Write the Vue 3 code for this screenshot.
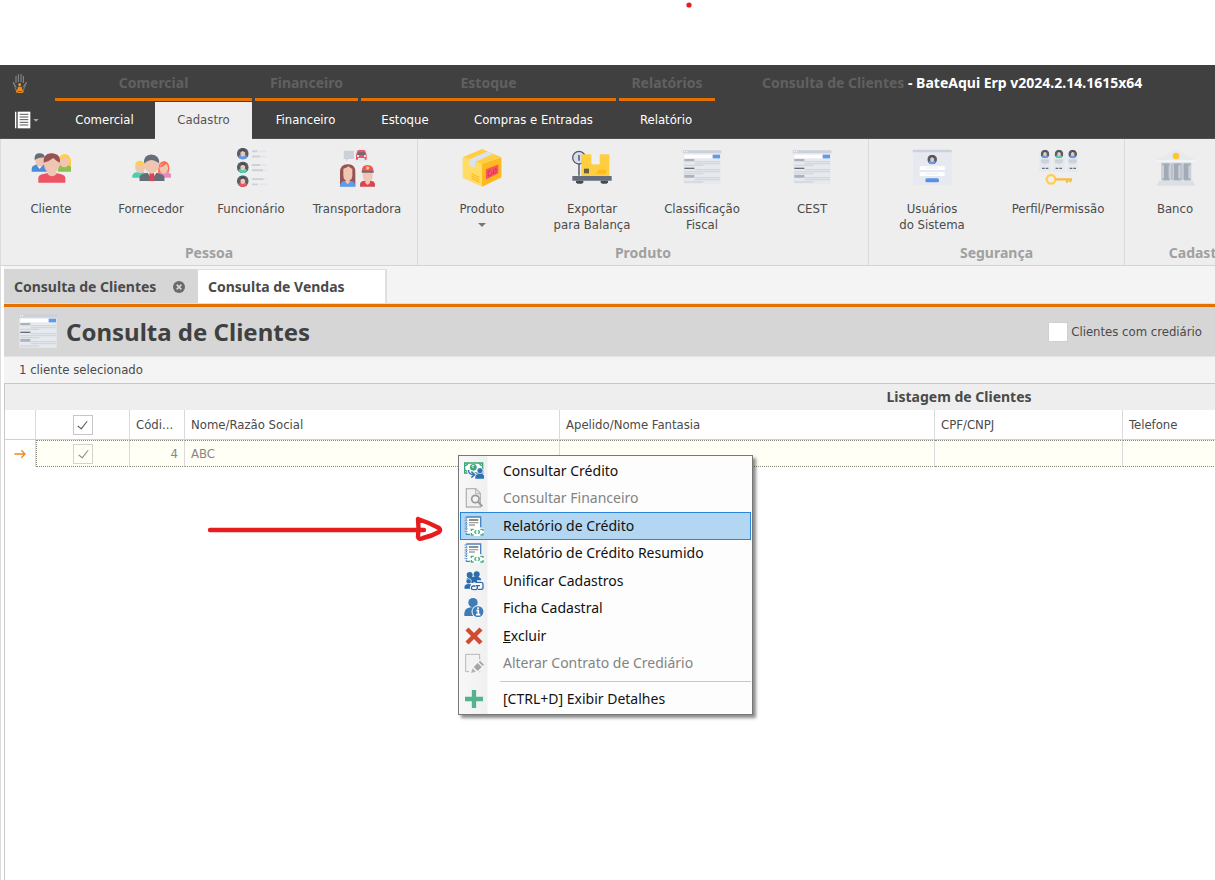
<script setup>
import { ref } from 'vue'

const contexts = [
  { label: 'Comercial', size: 'w197' },
  { label: 'Financeiro', size: 'w103' },
  { label: 'Estoque', size: 'w255' },
  { label: 'Relatórios', size: 'w96' },
]
const ribbonTabs = [
  { label: 'Comercial', size: 't101' },
  { label: 'Cadastro', size: 't97', active: true },
  { label: 'Financeiro', size: 't107' },
  { label: 'Estoque', size: 't92' },
  { label: 'Compras e Entradas', size: 't165' },
  { label: 'Relatório', size: 't100' },
]
const groups = [
  {
    label: 'Pessoa', kind: 'pessoa',
    items: [
      { icon: 'cliente', lines: ['Cliente'] },
      { icon: 'fornecedor', lines: ['Fornecedor'] },
      { icon: 'funcionario', lines: ['Funcionário'] },
      { icon: 'transportadora', lines: ['Transportadora'], wide: true },
    ],
  },
  {
    label: 'Produto', kind: 'produto',
    items: [
      { icon: 'caixa', lines: ['Produto'], drop: true },
      { icon: 'balanca', lines: ['Exportar', 'para Balança'] },
      { icon: 'lista', lines: ['Classificação', 'Fiscal'] },
      { icon: 'lista', lines: ['CEST'] },
    ],
  },
  {
    label: 'Segurança', kind: 'seguranca',
    items: [
      { icon: 'usuarios', lines: ['Usuários', 'do Sistema'] },
      { icon: 'perfil', lines: ['Perfil/Permissão'] },
    ],
  },
  { label: 'Cadastros', kind: 'cadastros', items: [{ icon: 'banco', lines: ['Banco'] }] },
]
const menu = [
  { icon: 'credito', label: 'Consultar Crédito' },
  { icon: 'financeiro', label: 'Consultar Financeiro', disabled: true },
  { icon: 'relatorio', label: 'Relatório de Crédito', hot: true },
  { icon: 'relatorio', label: 'Relatório de Crédito Resumido' },
  { icon: 'unificar', label: 'Unificar Cadastros' },
  { icon: 'ficha', label: 'Ficha Cadastral' },
  { icon: 'excluir', label: 'xcluir', key: 'E' },
  { icon: 'alterar', label: 'Alterar Contrato de Crediário', disabled: true },
]
const allChecked = ref(true)
const rowChecked = ref(true)
const withCredit = ref(false)
</script>

<template>
  <div class="app">
    <svg class="defs" aria-hidden="true">
      <symbol id="i-cliente" viewBox="-3 -4 120 120">
        <path d="M-1 70v-8q0-9 10-12l10-3h12l10 3q6 2 6 10v10z" fill="#4a8ddb" />
        <path d="M17 44h12v10l-6 8-6-8z" fill="#fff" /><ellipse cx="24" cy="38" rx="14" ry="17" fill="#f0c5b2" />
        <path d="M8 36q-3-20 13-21 16-1 18 13-12-2-18 1-10 2-13 7z" fill="#656d78" />
        <path d="M80 60q-6-40 18-42 22 0 20 40l-8 4H84z" fill="#ffc83f" />
        <path d="M78 70v-8q2-10 12-12h14q15 3 16 12v8z" fill="#8cc152" /><ellipse cx="97" cy="40" rx="14" ry="17" fill="#f0c5b2" /><path d="M82 32q18 0 24-12l8 34q4-36-16-36-14 0-16 14z" fill="#ffce54" />
        <path d="M19 103V90q0-9 11-12l17-4h24l17 4q12 3 12 12v13z" fill="#ed5564" />
        <path d="M47 66h26v12q-13 12-26 0z" fill="#f0c5b2" /><ellipse cx="59" cy="48" rx="23" ry="27" fill="#f0c5b2" />
        <path d="M35 43q-2-26 21-28 8-1 12 1 18 3 16 27-12-5-20-14-12 10-29 14z" fill="#965353" />
      </symbol>
      <symbol id="i-fornecedor" viewBox="-3 -4 122 122">
        <path d="M1 90v-6q1-8 12-11h22l10 5v12z" fill="#48cfad" /><ellipse cx="25" cy="58" rx="15" ry="18" fill="#f0c5b2" /><path d="M10 54q-1-15 14-16 15 0 16 14-15-5-30 2z" fill="#ffce54" />
        <path d="M80 76q-3-36 18-37 20 2 15 34z" fill="#fc6e51" /><path d="M76 90V78l12-5h20q12 3 13 11v6z" fill="#ec87c0" /><ellipse cx="97" cy="61" rx="13" ry="16" fill="#f0c5b2" /><path d="M84 58q15-2 20-12l8 8-14-14z" fill="#fc6e51" />
        <path d="M23 100V89q0-8 11-11l16-5h22l15 5q12 3 12 11v11z" fill="#656d78" />
        <path d="M46 72h30l-15 22z" fill="#fff" /><path d="M53 76h15v24H53z" fill="#da4453" /><ellipse cx="60" cy="51" rx="22" ry="26" fill="#f0c5b2" />
        <path d="M37 46q-3-25 22-27 25 1 24 27-16-10-23-10-8 0-23 10z" fill="#656d78" />
      </symbol>
      <symbol id="i-avatar" viewBox="0 0 36 36">
        <circle cx="18" cy="18" r="18" fill="#555e69" /><path d="M5 29q1-8 13-8t13 8q-5 7-13 7T5 29z" fill="currentColor" /><rect x="11" y="7" width="14" height="20" rx="7" fill="#f0c5b2" /><path d="M10 15q0-10 8-11 9 1 8 11-5-5-8-5t-8 5z" fill="#434a54" />
      </symbol>
      <symbol id="i-funcionario" viewBox="0 -2 122 122">
        <g color="#5d9cec"><use href="#i-avatar" x="18" y="0" width="36" height="36" /></g>
        <g color="#48cfad"><use href="#i-avatar" x="18" y="42" width="36" height="36" /></g>
        <g color="#ed5564"><use href="#i-avatar" x="18" y="84" width="36" height="36" /></g>
        <path d="M64 11h17M64 27h26M64 53h26M64 69h34M64 96h36M64 112h18" stroke="#ccd1d9" stroke-width="6" /><path d="M85 11h24M94 27h15M94 53h15M102 69h7M104 96h5M86 112h23" stroke="#e2e6ec" stroke-width="6" />
      </symbol>
      <symbol id="i-transportadora" viewBox="0 0 120 120">
        <path d="M20 11h31v25H33l-6 7v-7h-7z" fill="#ccd1d9" /><rect x="54" y="5" width="38" height="38" fill="#e6e9ed" /><path d="M57 38V24l4-12q1-3 5-3h14q4 0 5 3l4 12v14h-6v-5H63v5z" fill="#ed5564" /><path d="M64 16h19l2 8H61z" fill="#656d78" /><path d="M60 25h6v4h-6zM81 25h6v4h-6z" fill="#fff" />
        <path d="M9 118V75q0-22 23-23t23 23v43z" fill="#965353" /><path d="M9 119q0-14 11-17h24q11 4 11 17z" fill="#5d9cec" /><path d="M19 65q8-1 16-7 6 6 11 8v21q0 9-8 13v6l-6 6-6-6v-6q-7-4-7-13z" fill="#f0c5b2" />
        <path d="M69 119v-6q0-11 12-12h21q12 2 12 12v6z" fill="#da4453" /><path d="M77 70h30v18q0 10-8 15v5l-7 6-7-6v-5q-8-5-8-15z" fill="#f0c5b2" /><path d="M75 72q-2-18 17-18 18 1 17 18z" fill="#ed5564" /><path d="M73 71h37v6H75z" fill="#656d78" /><circle cx="92" cy="63" r="5" fill="#ffce54" />
      </symbol>
      <symbol id="i-caixa" viewBox="0 -2 120 122">
        <path d="M1 29l59 20v70L1 92z" fill="#ffdc66" /><path d="M60 49l59-20v62l-59 28z" fill="#ffb91d" /><path d="M1 29L60 4l59 25-59 21z" fill="#ffce44" />
        <path d="M20 37l56-25 17 7-54 25v18l-19-8z" fill="#dbe2ec" /><path d="M72 66l38-15v27L72 97z" fill="#fa5364" /><path d="M79 72l8-3m-8 3v15l11-5v-8m5-7l8-3v12l-8 3z" fill="none" stroke="#d93655" stroke-width="3" /><path d="M28 80l24 11M28 87l24 11M28 94l24 11" stroke="#ffbd27" stroke-width="4" />
      </symbol>
      <symbol id="i-balanca" viewBox="0 0 120 120">
        <path d="M21 44v42" stroke="#656d78" stroke-width="5" /><circle cx="21" cy="32" r="19" fill="#d6dfeb" stroke="#555e69" stroke-width="4" /><path d="M21 24v17" stroke="#434a54" stroke-width="4" /><path d="M28 22h84v65H28z" fill="#ffce3f" /><path d="M58 18h25v34H58z" fill="#eef0f4" /><path d="M36 65h15v14H36z" fill="#656049" /><path d="M80 68h23v12H71z" fill="#ffb91d" /><path d="M1 87h118v14H1z" fill="#656d78" /><path d="M12 101h22v6l-5 3H17l-5-3zm74 0h22v6l-5 3H91l-5-3z" fill="#434a54" />
      </symbol>
      <symbol id="i-lista" viewBox="0 0 120 120">
        <path d="M4 20h112v90H4z" fill="#e6e9ed" /><path d="M2 10h116v9H2z" fill="#ccd1d9" /><circle cx="7" cy="14" r="2" fill="#fff" /><circle cx="14" cy="14" r="2" fill="#fff" /><path d="M7 23h85v11H7z" fill="#fff" /><path d="M92 23h22v11H92z" fill="#5d9cec" /><path d="M38 44h76M7 55h57M38 50h76M38 68h76M7 74h107M7 80h57M38 92h76M38 98h76M7 105h57" stroke="#d2d6dd" stroke-width="4" /><path d="M7 36h30v7H7zM7 84h30v8H7z" fill="#aab2bd" /><path d="M7 62h30v4H7z" fill="#656d78" />
      </symbol>
      <symbol id="i-usuarios" viewBox="0 0 120 120">
        <path d="M3 10h116v105H3z" fill="#e6e9f0" /><path d="M2 8h117v8H2z" fill="#ccd1dc" /><g color="#5d9cec"><use href="#i-avatar" x="46" y="23" width="29" height="29" /></g><path d="M23 58h75v11H23zM23 76h75v11H23z" fill="#fff" /><path d="M42 63h36M42 81h36" stroke="#e0e4eb" stroke-width="2" /><rect x="40" y="94" width="41" height="12" rx="5" fill="#5592e4" />
      </symbol>
      <symbol id="i-perfil" viewBox="-3 0 120 120">
        <path d="M0 22h36v53H0zM42 22h36v53H42zM84 22h36v53H84z" fill="#e6e9ed" /><g color="#5d9cec"><use href="#i-avatar" x="5" y="8" width="26" height="26" /></g><g color="#48cfad"><use href="#i-avatar" x="47" y="8" width="26" height="26" /></g><g color="#5d9cec"><use href="#i-avatar" x="88" y="8" width="26" height="26" /></g><path d="M7 38h22v9H7zM49 38h22v9H49zM90 38h22v9H90zM12 50h12M54 50h12M95 50h12" fill="#ccd1d9" stroke="#ccd1d9" stroke-width="2" /><path d="M9 64h19M50 64h19M92 64h19" stroke="#656d78" stroke-width="4" stroke-dasharray="8 3" /><circle cx="36" cy="97" r="13" fill="none" stroke="#ffce54" stroke-width="7" /><path d="M49 97h50M84 98v9M94 98v8" stroke="#f6bb42" stroke-width="7" />
      </symbol>
      <symbol id="i-banco" viewBox="-3 0 120 120">
        <path d="M60 6l60 34v6H0v-6z" fill="#e6e9ed" /><path d="M0 40h120v6H0z" fill="#f3f4f6" /><path d="M15 47h91v53H15z" fill="#ccd1d9" /><path d="M19 52h22M53 52h22M84 52h20M19 97h22M53 97h22M84 97h20" stroke="#aab2bd" stroke-width="7" /><path d="M24 52h14v46H24zM54 52h13v46H54zM83 52h14v46H83z" fill="#a2aab6" /><path d="M45 52h6v46h-6zM73 52h6v46h-6z" fill="#b9c0ca" /><path d="M8 101h104v6l6 4v5H2v-5l6-4z" fill="#dce0e6" /><circle cx="60" cy="27" r="10" fill="#ffc72c" />
      </symbol>

      <symbol id="i-credito" viewBox="0 0 60 60">
        <path d="M2 6h54v30H2z" fill="#fff" stroke="#3aa676" stroke-width="4" /><path d="M2 14q8 0 9-8M56 14q-8 0-9-8M2 28q8 0 9 8" fill="none" stroke="#3aa676" stroke-width="4" /><circle cx="28" cy="19" r="10" fill="#3aa676" /><path d="M31 14q-7-3-7 2 1 4 5 4" fill="none" stroke="#fff" stroke-width="3" /><path d="M13 27q1 14 16 14m-7-9l10 9-10 9" fill="none" stroke="#fff" stroke-width="10" /><path d="M13 27q1 14 16 14m-7-9l10 9-10 9" fill="none" stroke="#3b79b7" stroke-width="5" /><circle cx="48" cy="29" r="9" fill="#2f71b3" stroke="#fff" stroke-width="2" /><path d="M34 53v-6q1-9 14-9t12 9v6z" fill="#2f71b3" />
      </symbol>
      <symbol id="i-financeiro" viewBox="0 0 60 60">
        <path d="M7 2h28l14 14v41H7z" fill="#f0f0f0" stroke="#b5b5b5" stroke-width="4" /><path d="M35 2v15h14" fill="none" stroke="#b5b5b5" stroke-width="3" /><circle cx="34" cy="33" r="11" fill="#f4f4f4" stroke="#999" stroke-width="5" /><path d="M42 41l13 14" stroke="#999" stroke-width="6" />
      </symbol>
      <symbol id="i-relatorio" viewBox="0 0 60 60">
        <path d="M7 3h43v33L20 56H7z" fill="#fff" /><path d="M7 3h43v31M7 55h11" fill="none" stroke="#4b83bc" stroke-width="4" /><path d="M7 3v53" stroke="#4b83bc" stroke-width="4" stroke-dasharray="4 3" /><path d="M1 6h10M1 14h10M1 22h10M1 30h10M1 38h10M1 46h10" stroke="#87a9cc" stroke-width="3" /><path d="M15 12h28" stroke="#777" stroke-width="5" /><path d="M15 20h28M15 27h18" stroke="#a0a0a0" stroke-width="4" /><rect x="19" y="36" width="41" height="24" rx="4" fill="#fff" /><path d="M22 45v-5h7M49 40h8v5M57 51v6h-8M29 57h-7v-6" fill="none" stroke="#42ad7e" stroke-width="4" /><path d="M37 43q-9 5 0 10M42 43q9 5 0 10" fill="none" stroke="#42ad7e" stroke-width="4" />
      </symbol>
      <symbol id="i-unificar" viewBox="0 0 60 60">
        <g fill="#2d6dad"><circle cx="17" cy="12" r="9" /><circle cx="38" cy="10" r="9" /><path d="M7 36V25q4-8 18-7 7-3 18 0 9 2 9 12v6H7z" /><circle cx="14" cy="31" r="8" stroke="#fff" stroke-width="2" /><path d="M1 54v-7q2-9 13-9 8 0 11 6l-5 10z" stroke="#fff" stroke-width="1" /></g><path d="M39 32h12q6 0 6 6t-6 6H39m2 12H29q-7 0-7-6t7-6h12M37 50h13M38 38H28" fill="none" stroke="#fff" stroke-width="9" /><path d="M34 34h18q5 0 5 5v11q0 5-5 5H42M48 44H36M40 44v6q0 6-6 6h-7q-5 0-5-5t5-6h8" fill="none" stroke="#2d6dad" stroke-width="4" />
      </symbol>
      <symbol id="i-ficha" viewBox="0 0 60 60">
        <circle cx="27" cy="14" r="14" fill="#3e7cb9" /><path d="M1 54v-8q1-16 19-18h14q13 2 16 12v14z" fill="#3e7cb9" /><circle cx="42" cy="41" r="18" fill="#3e7cb9" stroke="#fff" stroke-width="3" /><path d="M42 28v6M37 38h6v12m-7 0h13" fill="none" stroke="#fff" stroke-width="5" />
      </symbol>
      <symbol id="i-excluir" viewBox="0 0 60 60"><path d="M9 9l42 42M51 9L9 51" stroke="#d14b30" stroke-width="13" /></symbol>
      <symbol id="i-alterar" viewBox="0 0 60 60">
        <path d="M5 4h42v52H5z" fill="#f2f2f2" stroke="#b7b7b7" stroke-width="3" /><path d="M14 60l5-18 26-24 20 16-26 30z" fill="#f4f4f4" /><path d="M29 42l12-12 12 12-12 12z" fill="#a5a5a5" /><path d="M44 27l4-4 12 12-4 4z" fill="#a5a5a5" /><path d="M26 46l10 10-15 4z" fill="#b3b3b3" />
      </symbol>
      <symbol id="i-detalhes" viewBox="0 0 60 60"><path d="M30 3v54M3 30h54" stroke="#56b28c" stroke-width="13" /></symbol>
    </svg>

    <div class="window">
      <header class="titlebar">
        <svg class="logo" viewBox="0 0 48 60" aria-hidden="true">
          <path d="M12 29V10M19 26V5M27 26V4M34 29V10M4 28l8 14M43 28l-9 14" fill="none" stroke="#8f8f8f" stroke-width="3" stroke-linecap="round" /><path d="M4 30l9 22M43 30l-9 22" fill="none" stroke="#8a7a66" stroke-width="3" /><circle cx="23" cy="35" r="4" fill="#f5a02a" /><path d="M18 41h11l2 9h5l-5 4H15l-5-4h6z" fill="#f08b16" /><path d="M12 55q11 7 23 0" fill="none" stroke="#e98a1d" stroke-width="4" />
        </svg>
        <div class="contexts">
          <span v-for="c in contexts" :key="c.label" class="context" :class="c.size">{{ c.label }}</span>
        </div>
        <h1 class="apptitle"><span>Consulta de Clientes</span> - BateAqui Erp v2024.2.14.1615x64</h1>
      </header>

      <nav class="tabs">
        <button class="appmenu" aria-label="Menu">
          <svg viewBox="0 0 78 54" aria-hidden="true"><path d="M2 2v50" stroke="#fff" stroke-width="4" /><path d="M8 2h38v50H8z" fill="#fff" /><path d="M14 10h26M14 18h26M14 26h26M14 34h26M14 42h26" stroke="#555" stroke-width="3" /><path d="M55 24h16l-8 8z" fill="#aaa" /></svg>
        </button>
        <button v-for="t in ribbonTabs" :key="t.label" class="tab" :class="[t.size, { active: t.active }]">{{ t.label }}</button>
      </nav>

      <div class="ribbon">
        <section v-for="g in groups" :key="g.label" class="group" :class="g.kind">
          <div class="items">
            <button v-for="i in g.items" :key="i.lines[0]" class="item" :class="{ wide: i.wide }">
              <svg class="bigicon" aria-hidden="true"><use :href="'#i-' + i.icon" /></svg>
              <span v-for="l in i.lines" :key="l">{{ l }}</span>
              <i v-if="i.drop" class="caret"></i>
            </button>
          </div>
          <div class="grouplabel">{{ g.label }}</div>
        </section>
      </div>

      <main class="work">
        <div class="doctabs">
          <button class="doctab current">Consulta de Clientes
            <svg viewBox="0 0 36 36" aria-hidden="true"><circle cx="18" cy="18" r="18" fill="#6a6a6a" /><path d="M11 11l14 14M25 11L11 25" stroke="#d6d6d6" stroke-width="5" /></svg>
          </button>
          <button class="doctab">Consulta de Vendas</button>
        </div>

        <div class="heading">
          <svg class="headicon" aria-hidden="true"><use href="#i-lista" /></svg>
          <h2>Consulta de Clientes</h2>
          <label class="credit"><input v-model="withCredit" type="checkbox" class="box plain" />Clientes com crediário</label>
        </div>
        <p class="status">1 cliente selecionado</p>

        <div class="listing">
          <table>
            <colgroup><col class="c1" /><col class="c2" /><col class="c3" /><col class="c4" /><col class="c4" /><col class="c6" /><col /></colgroup>
            <thead>
              <tr class="band"><th colspan="7">Listagem de Clientes</th></tr>
              <tr class="cols">
                <th></th>
                <th class="mid"><input v-model="allChecked" type="checkbox" class="box" aria-label="Selecionar todos" /></th>
                <th>Códi...</th><th>Nome/Razão Social</th><th>Apelido/Nome Fantasia</th><th>CPF/CNPJ</th><th>Telefone</th>
              </tr>
            </thead>
            <tbody>
              <tr>
                <td class="mark"><svg viewBox="0 0 36 30" aria-hidden="true"><path d="M1 15h32M22 4l11 11-11 11" fill="none" stroke="#f5871f" stroke-width="4" /></svg></td>
                <td class="mid first"><input v-model="rowChecked" type="checkbox" class="box faded" aria-label="Selecionar ABC" /></td>
                <td class="num">4</td><td>ABC</td><td></td><td></td><td></td>
              </tr>
            </tbody>
          </table>
        </div>
      </main>
    </div>

    <div class="menu" role="menu">
      <div class="menulist">
        <button v-for="m in menu" :key="m.label" class="entry" :class="{ hot: m.hot }" :disabled="m.disabled" role="menuitem">
          <svg aria-hidden="true"><use :href="'#i-' + m.icon" /></svg>
          <span><u v-if="m.key">{{ m.key }}</u>{{ m.label }}</span>
        </button>
      </div>
      <hr />
      <button class="entry last" role="menuitem"><svg aria-hidden="true"><use href="#i-detalhes" /></svg><span>[CTRL+D] Exibir Detalhes</span></button>
    </div>

    <svg class="dot" viewBox="0 0 6 6" aria-hidden="true"><circle cx="3" cy="3" r="2.6" fill="#e71d1d" /></svg>
    <svg class="arrow" viewBox="0 0 240 30" aria-hidden="true"><g fill="none" stroke="#e71d1d" stroke-width="4.4" stroke-linecap="round" stroke-linejoin="round"><path d="M5 15h214" /><path d="M213 4q1 9 0 18 1 3 5 1 9-2 16-6 2-2 0-4-9-5-21-9" /></g></svg>
  </div>
</template>

<style>
body { margin: 0; background: #fff; }
</style>

<style scoped>
.app { position: relative; min-height: 100vh; overflow: hidden; display: flex; flex-direction: column; padding-top: 65px; box-sizing: border-box; font: 13px/16px "DejaVu Sans Condensed", "DejaVu Sans", sans-serif; color: #4a4a4a; }
.defs { position: absolute; width: 0; height: 0; }
button { font: inherit; color: inherit; border: 0; padding: 0; margin: 0; background: none; }
.window { flex: 1; display: flex; flex-direction: column; border-left: 1px solid #dcdcdc; }
.titlebar { height: 37px; background: #404040; display: flex; align-items: stretch; margin-left: -1px; white-space: nowrap; font: 700 14px/16px "Noto Sans", sans-serif; }
.logo { width: 16px; height: 20px; margin: 8px 27px 0 12px; flex: none; }
.contexts { display: flex; gap: 3px; }
.context { box-sizing: border-box; padding-top: 10px; text-align: center; color: #606060; border-bottom: 3px solid #e57200; margin-bottom: 1px; }
.w197 { width: 197px; } .w103 { width: 103px; } .w255 { width: 255px; } .w96 { width: 96px; }
.apptitle { margin: 10px 0 0 47px; font-size: 14px; color: #fff; }
.apptitle span { color: #606060; }
.tabs { height: 36px; background: #404040; display: flex; margin-left: -1px; border-bottom: 1px solid #505050; color: #fff; }
.appmenu { width: 54px; flex: none; padding-left: 15px; text-align: left; line-height: 0; }
.appmenu svg { width: 26px; height: 18px; }
.tab { flex: none; padding-bottom: 1px; }
.tab.active { background: #eee; color: #555; margin-bottom: -1px; }
.t101 { width: 101px; } .t97 { width: 97px; } .t107 { width: 107px; } .t92 { width: 92px; } .t165 { width: 165px; } .t100 { width: 100px; }
.ribbon { height: 126px; display: flex; background: #eee; border-bottom: 1px solid #d4d4d4; overflow: hidden; }
.group { flex: none; display: flex; flex-direction: column; justify-content: space-between; border-right: 1px solid #d9d9d9; box-sizing: border-box; padding-bottom: 4px; }
.items { display: flex; align-items: flex-start; }
.item { display: flex; flex-direction: column; align-items: center; width: 100px; padding-top: 8px; white-space: nowrap; }
.item.wide { width: 112px; }
.bigicon { width: 40px; height: 40px; margin-bottom: 14px; }
.caret { border: 4px solid transparent; border-top-color: #777; border-bottom: 0; margin-top: 6px; }
.grouplabel { text-align: center; font: 700 14px/16px "Noto Sans", sans-serif; color: #a0a0a0; }
.pessoa { width: 417px; }
.produto { width: 451px; padding-left: 9px; }
.produto .item { width: 110px; }
.produto .grouplabel { margin-left: -9px; }
.seguranca { width: 256px; }
.seguranca .item { width: 126px; }
.cadastros { width: 158px; }
.work { flex: 1; margin-left: 3px; display: flex; flex-direction: column; background: #fff; }
.doctabs { display: flex; align-items: stretch; height: 38px; padding-top: 3px; box-sizing: border-box; background: #f4f4f4; font: 700 14px/16px "Noto Sans", sans-serif; border-bottom: 1px solid #e0e0e0; }
.doctab { background: #fff; width: 189px; padding: 0 10px; text-align: left; border-right: 2px solid #e0e0e0; border-top: 1px solid #e0e0e0; }
.doctab.current { width: 194px; background: #d6d6d6; display: flex; align-items: center; justify-content: space-between; border-color: #d6d6d6; }
.doctab svg { width: 12px; height: 12px; margin-right: 1px; }
.heading { display: flex; align-items: center; height: 49px; background: #d6d6d6; border-top: 3px solid #e57200; padding: 0 13px 0 14px; border-bottom: 1px solid #e4e4e4; }
.headicon { width: 40px; height: 40px; margin: 0 8px 2px 0; }
h2 { margin: 0; flex: 1; font: 700 24px/32px "Noto Sans", sans-serif; color: #404040; }
.credit { display: flex; align-items: center; gap: 3px; }
.status { margin: 0; padding: 5px 15px; background: #f4f4f4; }
.listing { flex: 1; border-left: 1px solid #c8c8c8; border-top: 1px solid #c8c8c8; overflow: hidden; }
table { width: 1909px; table-layout: fixed; border-collapse: separate; border-spacing: 0; }
.c1 { width: 31px; } .c2 { width: 94px; } .c3 { width: 55px; } .c4 { width: 375px; } .c6 { width: 188px; }
th, td { padding: 0 6px; text-align: left; font-weight: 400; box-sizing: border-box; border-right: 1px solid #dadada; white-space: nowrap; }
.band th { height: 26px; background: #eee; text-align: center; font: 700 14px/16px "Noto Sans", sans-serif; }
.cols th { height: 30px; border-bottom: 1px solid #d0d0d0; }
td { height: 27px; background: #fffff5; border-top: 1px dotted #8a8a7c; border-bottom: 1px dotted #8a8a7c; color: #868686; }
td.first { border-left: 1px dotted #8a8a7c; }
td.mark { background: #fff; border-top: 0; border-bottom: 0; text-align: center; line-height: 0; }
.mark svg { width: 12px; height: 10px; }
.mid { text-align: center; line-height: 0; }
td.num { text-align: right; }
.box { appearance: none; width: 20px; height: 20px; margin: 0; background: #fff; border: 1px solid #c6c6c6; box-sizing: border-box; display: inline-grid; place-content: center; }
.box:checked::before { content: ""; width: 4px; height: 9px; border: solid #555; border-width: 0 1px 1px 0; transform: rotate(38deg); margin-bottom: 2px; }
.box.plain { border-color: #d0d0d0; }
.box.faded { background: #fffff5; border-color: #d4d4cc; }
.box.faded:checked::before { border-color: #888; }
.menu { position: absolute; left: 458px; top: 455px; width: 295px; box-sizing: border-box; border: 1px solid #777; padding: 1px; background: linear-gradient(90deg, #f8f8f8, #f0f0f0 28px, #fdfdfd 29px); box-shadow: 3px 3px 3px rgba(0, 0, 0, 0.45); color: #111; font: 14px/16px "Noto Sans", sans-serif; }
.menulist { display: grid; grid-auto-rows: 1fr; height: 220px; }
.entry { box-sizing: border-box; width: 100%; display: flex; align-items: center; gap: 19px; padding-left: 4px; border: 1px solid transparent; text-align: left; white-space: nowrap; }
.entry svg { width: 20px; height: 20px; flex: none; margin-left: -1px; }
.entry:disabled { color: #838383; }
.entry.hot { background: #b3d7f3; border-color: #2a86d8; }
.entry.last { height: 28px; }
hr { border: 0; border-top: 1px solid #c8c8c8; margin: 4px 0 3px 40px; }
.dot { position: absolute; left: 686px; top: 2px; width: 6px; height: 6px; }
.arrow { position: absolute; left: 205px; top: 515px; width: 240px; height: 30px; }
</style>
